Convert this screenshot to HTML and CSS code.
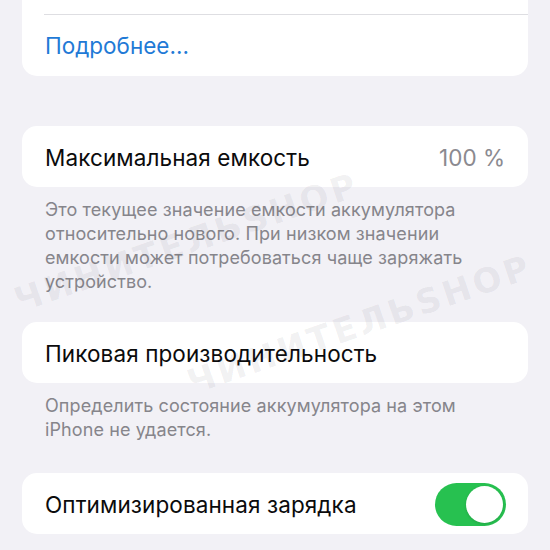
FILE: index.html
```html
<!DOCTYPE html>
<html lang="ru">
<head>
<meta charset="utf-8">
<link rel="stylesheet" href="styles.css">
</head>
<body>
<div class="page">
  <div class="card card-top">
    <div class="row row-hidden"></div>
    <div class="row row-sep"><span class="link">Подробнее...</span></div>
  </div>

  <div class="card">
    <div class="row"><span class="label">Максимальная емкость</span><span class="value">100 %</span></div>
  </div>
  <p class="footer footer-cap">Это текущее значение емкости аккумулятора относительно нового. При низком значении емкости может потребоваться чаще заряжать устройство.</p>

  <div class="card">
    <div class="row"><span class="label">Пиковая производительность</span></div>
  </div>
  <p class="footer footer-peak">Определить состояние аккумулятора на этом iPhone не удается.</p>

  <div class="card">
    <div class="row"><span class="label">Оптимизированная зарядка</span><span class="toggle"><span class="knob"></span></span></div>
  </div>
</div>
<div class="watermark wm1">ЧИНИТЕЛЬSHOP</div>
<div class="watermark wm2">ЧИНИТЕЛЬSHOP</div>
</body>
</html>
```

FILE: styles.css
```css
html, body {
  margin: 0;
  padding: 0;
  background: #f2f1f6;
  width: 550px;
  height: 550px;
  overflow: hidden;
}
body {
  position: relative;
  font-family: Inter, "Noto Sans", "Liberation Sans", sans-serif;
  -webkit-font-smoothing: antialiased;
}
.page {
  padding: 0 22px;
}
.card {
  background: #ffffff;
  border-radius: 15px;
  overflow: hidden;
}
.card-top {
  margin-top: -47px;
  margin-bottom: 50px;
}
.row {
  height: 61px;
  display: flex;
  align-items: center;
  justify-content: space-between;
  padding: 1px 23px 0 23px;
  box-sizing: border-box;
}
.row-sep {
  border-top: 1px solid #dedee2;
  margin-left: 22px;
  padding-left: 1px;
  padding-top: 0;
  height: 62px;
}
.link {
  color: #1f7ad6;
  font-size: 22.5px;
}
.label {
  color: #0b0b0c;
  font-size: 22.5px;
  letter-spacing: 0.1px;
}
.value {
  color: #8b8a90;
  font-size: 22.5px;
}
.footer {
  margin: 0;
  padding: 11px 22px 0 23px;
  color: #86858b;
  font-size: 18px;
  line-height: 24px;
  letter-spacing: 0.1px;
}
.footer-cap {
  margin-bottom: 28px;
}
.footer-peak {
  margin-bottom: 31px;
}
.toggle {
  width: 71px;
  height: 43px;
  border-radius: 22px;
  background: #27c150;
  display: flex;
  align-items: center;
  justify-content: flex-end;
  padding: 3px;
  box-sizing: border-box;
  margin-right: -1px;
}
.knob {
  width: 37px;
  height: 37px;
  border-radius: 50%;
  background: #ffffff;
  box-shadow: 0 1px 3px rgba(0,0,0,0.15);
}
.watermark {
  position: absolute;
  font-family: "DejaVu Sans", "Liberation Sans", sans-serif;
  font-weight: 700;
  font-size: 34px;
  letter-spacing: 3.5px;
  color: rgba(60, 60, 72, 0.075);
  transform: rotate(-19deg);
  transform-origin: left bottom;
  white-space: nowrap;
  pointer-events: none;
}
.wm1 {
  left: 22px;
  top: 280px;
}
.wm2 {
  left: 195px;
  top: 362px;
}
```
